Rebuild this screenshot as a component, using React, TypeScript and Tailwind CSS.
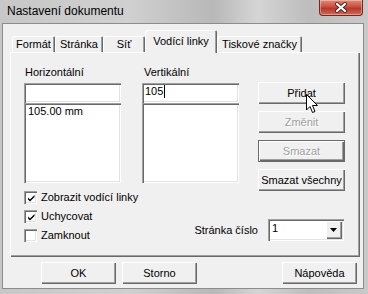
import React from "react";

const raised =
  "shadow-[inset_1px_1px_0_#ffffff,inset_-1px_-1px_0_#696969,inset_-2px_-2px_0_#a0a0a0]";
const framed =
  "shadow-[inset_0_0_0_1px_#6a6a6a,inset_2px_2px_0_#ffffff,inset_-2px_-2px_0_#696969,inset_-3px_-3px_0_#a0a0a0]";
const sunken =
  "shadow-[inset_1px_1px_0_#a0a0a0,inset_2px_2px_0_#696969,inset_-1px_-1px_0_#ffffff,inset_-2px_-2px_0_#e3e3e3]";
const tabEdge =
  "shadow-[inset_1px_1px_0_#ffffff,inset_-1px_0_0_#696969,inset_-2px_0_0_#a0a0a0]";

function Button({
  label,
  disabled,
  focused,
  className = "",
}: {
  label: string;
  disabled?: boolean;
  focused?: boolean;
  className?: string;
}) {
  return (
    <div
      className={`flex h-[22px] items-center justify-center bg-[#f0f0f0] ${
        focused ? framed : raised
      } ${
        disabled ? "text-[#a0a0a0] [text-shadow:1px_1px_0_#ffffff]" : "text-black"
      } ${className}`}
    >
      {label}
    </div>
  );
}

function Tab({ label, width }: { label: string; width: string }) {
  return (
    <div
      className={`flex h-[16px] justify-center rounded-t-[2px] pt-[2px] ${tabEdge} ${width}`}
    >
      {label}
    </div>
  );
}

function Check({ label, checked }: { label: string; checked?: boolean }) {
  return (
    <div className="flex h-[13px] items-center">
      <div className={`flex h-[13px] w-[13px] items-center justify-center bg-white ${sunken}`}>
        {checked && (
          <svg width="9" height="9" viewBox="0 0 9 9" className="ml-[1px] mt-[1px]">
            <path d="M1 3.5 L3 5.5 L7.5 1 L7.5 3 L3 7.5 L1 5.5 Z" fill="#000" />
          </svg>
        )}
      </div>
      <span className="ml-[4px]">{label}</span>
    </div>
  );
}

function Column({
  label,
  value,
  items,
  className = "",
}: {
  label: string;
  value?: string;
  items: string[];
  className?: string;
}) {
  return (
    <div className={`flex w-[97px] flex-col ${className}`}>
      <div className="h-[13px] pl-[1px]">{label}</div>
      <div className={`mt-[4px] flex h-[20px] bg-white pl-[3px] pt-[2px] ${sunken}`}>
        {value && (
          <>
            <span>{value}</span>
            <span className="ml-[1px] mt-[0px] h-[13px] w-px bg-black" />
          </>
        )}
      </div>
      <div className={`h-[80px] bg-white pl-[4px] pt-[2px] ${sunken}`}>
        {items.map((it) => (
          <div key={it}>{it}</div>
        ))}
      </div>
    </div>
  );
}

export default function App() {
  return (
    <div
      className="relative h-[294px] w-[368px] overflow-hidden bg-[linear-gradient(to_right,#c7c7c7,#d0d0d0_35%,#b8b8b8_58%,#d5d5d5_70%,#bdbdbd_84%,#c9c9c9)] text-[11px] leading-[13px] text-black"
      style={{ fontFamily: '"Liberation Sans", Arial, sans-serif' }}
    >
      {/* title bar */}
      <div className="flex h-[23px] justify-between">
        <div className="pl-[7px] pt-[4px] text-[12px] leading-[14px]">Nastavení dokumentu</div>
        <div className="mr-[5px] flex h-[16px] w-[44px] items-center justify-center rounded-b-[4px] border border-t-0 border-[#6b2a22] bg-[linear-gradient(to_bottom,#e08a78,#c8503e_45%,#b8372a_55%,#cf6a55)] shadow-[inset_0_0_0_1px_rgba(255,255,255,0.35)]">
          <svg width="14" height="11" viewBox="0 0 14 11">
            <path d="M3 2 L11 9 M11 2 L3 9" stroke="#4a2a26" strokeWidth="4" strokeLinecap="round" />
            <path d="M3 2 L11 9 M11 2 L3 9" stroke="#ffffff" strokeWidth="2.2" strokeLinecap="round" />
          </svg>
        </div>
      </div>

      {/* client area */}
      <div className="ml-[2px] h-[266px] w-[362px] border border-[#8c8c8c] bg-[#f0f0f0]">
        {/* tab strip */}
        <div className="ml-[7px] mt-[6px] flex h-[22px] items-end pl-[2px]">
          <Tab label="Formát" width="w-[43px]" />
          <Tab label="Stránka" width="w-[48px]" />
          <Tab label="Síť" width="w-[42px]" />
          <div
            className={`relative z-10 -mb-[1px] flex h-[23px] w-[72px] justify-center rounded-t-[2px] bg-[#f0f0f0] pt-[5px] ${tabEdge}`}
          >
            Vodící linky
          </div>
          <Tab label="Tiskové značky" width="w-[85px]" />
        </div>

        {/* tab page */}
        <div className={`ml-[7px] h-[205px] w-[350px] pl-[14px] pt-[14px] ${raised}`}>
          <div className="flex items-start">
            <Column label="Horizontální" items={["105.00 mm"]} />
            <Column label="Vertikální" value="105" items={[]} className="ml-[21px] [&>div:first-child]:pl-[2px]" />
            <div className="ml-[19px] flex w-[87px] flex-col gap-[7px] pt-[16px]">
              <Button label="Přidat" />
              <Button label="Změnit" disabled />
              <Button label="Smazat" disabled focused />
              <Button label="Smazat všechny" />
            </div>
          </div>

          <div className="flex w-[321px] items-start">
            <div className="flex flex-col gap-[6px]">
              <Check label="Zobrazit vodící linky" checked />
              <Check label="Uchycovat" checked />
              <Check label="Zamknout" />
            </div>
            <div className="ml-auto mr-[1px] mt-[28px] flex items-center">
              <span>Stránka číslo</span>
              <div className={`ml-[10px] flex h-[22px] w-[76px] bg-white p-[2px] ${sunken}`}>
                <span className="ml-[2px] mt-[1px] flex-1">1</span>
                <div className={`flex h-[18px] w-[16px] items-center justify-center bg-[#f0f0f0] ${raised}`}>
                  <svg width="7" height="4" viewBox="0 0 7 4" className="-ml-[1px] -mt-[1px]">
                    <path d="M0 0 H7 L3.5 4 Z" fill="#000" />
                  </svg>
                </div>
              </div>
            </div>
          </div>
        </div>

        {/* bottom buttons */}
        <div className="mt-[5px] flex">
          <Button label="OK" className="ml-[38px] w-[75px]" />
          <Button label="Storno" className="ml-[6px] w-[75px]" />
          <Button label="Nápověda" className="ml-auto mr-[6px] w-[75px]" />
        </div>
      </div>

      {/* mouse pointer over Přidat */}
      <svg
        className="absolute left-[306px] top-[94px]"
        width="13"
        height="20"
        viewBox="0 0 13 20"
      >
        <path
          d="M0.5 0.5 L0.5 16 L4 12.5 L6.5 18.5 L9 17.5 L6.5 11.5 L11.5 11.5 Z"
          fill="#ffffff"
          stroke="#000000"
          strokeWidth="1"
          strokeLinejoin="miter"
        />
      </svg>
    </div>
  );
}
